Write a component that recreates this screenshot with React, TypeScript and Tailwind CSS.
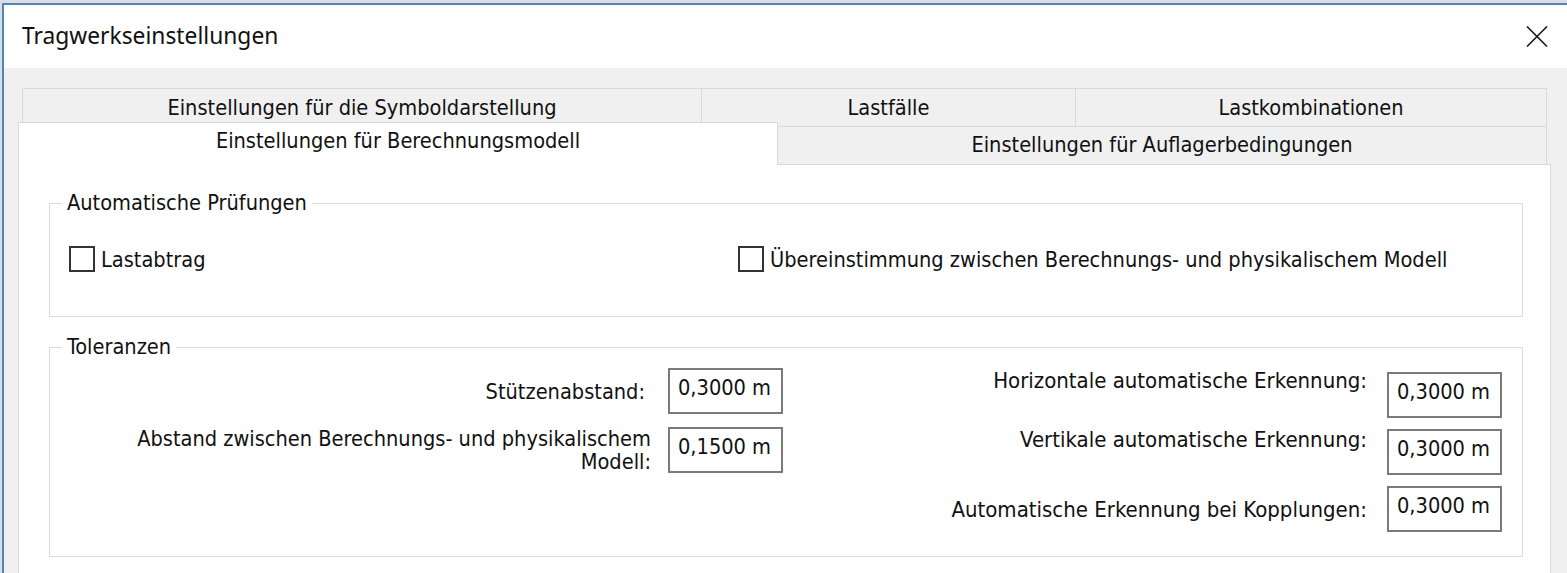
import React from "react";

const UI = "font-['DejaVu_Sans_Condensed','DejaVu_Sans','Liberation_Sans',sans-serif] text-[21.6px] text-[#111]";

function CloseIcon() {
  return (
    <svg width="22" height="21" viewBox="0 0 22 21" fill="none" stroke="#1a1a1a" strokeWidth="1.6">
      <path d="M1 0.5 L21 20.5 M21 0.5 L1 20.5" />
    </svg>
  );
}

function CheckBox({ label }: { label: string }) {
  return (
    <div className="flex items-center">
      <span className="h-[26px] w-[26px] border-2 border-[#333] bg-white" />
      <span className="ml-[6px] leading-[25px]">{label}</span>
    </div>
  );
}

function ValueBox({ value }: { value: string }) {
  return (
    <div className="h-[46px] w-[115px] border-2 border-[#7a7a7a] bg-white pl-[8px] pt-[5px] leading-[25px]">{value}</div>
  );
}

export default function App() {
  return (
    <div className={`h-[573px] w-[1567px] overflow-hidden bg-[#dedede] pl-[2px] pt-[3px] ${UI}`}>
      <div className="flex h-[600px] flex-col border-l-2 border-t-2 border-[#4a86c5] bg-[#f0f0f0]">
        {/* title bar */}
        <div className="flex h-[63px] shrink-0 items-center justify-between bg-white pl-[18px] pr-[19px]">
          <span className="font-['Noto_Sans',sans-serif] text-[22.8px] text-[#111]">Tragwerkseinstellungen</span>
          <CloseIcon />
        </div>

        <div className="pl-[14px] pt-[20px]">
          {/* upper tab row */}
          <div className="flex pl-[4px]">
            <div className="flex h-[38px] w-[680px] items-center justify-center border-l border-r border-t border-[#d9d9d9] pt-[2px]">
              Einstellungen für die Symboldarstellung
            </div>
            <div className="flex h-[38px] w-[374px] items-center justify-center border-r border-t border-[#d9d9d9] pt-[2px]">
              Lastfälle
            </div>
            <div className="flex h-[38px] w-[471px] items-center justify-center border-r border-t border-[#d9d9d9] pt-[2px]">
              Lastkombinationen
            </div>
          </div>

          {/* lower tab row */}
          <div className="flex h-[38px] items-start">
            <div className="relative z-10 -mb-px -mt-[4px] flex h-[43px] w-[760px] items-center justify-center border-l border-r border-t border-[#d9d9d9] bg-white pb-[5px]">
              Einstellungen für Berechnungsmodell
            </div>
            <div className="flex h-[38px] w-[769px] items-center justify-center border-r border-t border-[#d9d9d9]">
              Einstellungen für Auflagerbedingungen
            </div>
          </div>

          {/* tab page */}
          <div className="h-[420px] w-[1533px] border border-[#d9d9d9] bg-white pl-[30px] pr-[27px] pt-[26px]">
            <fieldset className="border border-[#dcdcdc]">
              <legend className="ml-[12px] px-[5px] leading-[24px]">Automatische Prüfungen</legend>
              <div className="flex pb-[44px] pl-[19px] pt-[31px]">
                <div className="w-[669px]">
                  <CheckBox label="Lastabtrag" />
                </div>
                <CheckBox label="Übereinstimmung zwischen Berechnungs- und physikalischem Modell" />
              </div>
            </fieldset>

            <fieldset className="mt-[18px] border border-[#dcdcdc]">
              <legend className="ml-[12px] px-[5px] leading-[24px]">Toleranzen</legend>
              <div className="flex items-start pb-[24px]">
                <div className="grid grid-cols-[601px_115px] items-center gap-x-[17px] gap-y-[13px] pt-[9px]">
                  <span className="pr-[6px] text-right leading-[25px]">Stützenabstand:</span>
                  <ValueBox value="0,3000 m" />
                  <span className="text-right leading-[23px]">
                    Abstand zwischen Berechnungs- und physikalischem
                    <br />
                    Modell:
                  </span>
                  <ValueBox value="0,1500 m" />
                </div>

                <div className="ml-[84px] grid grid-cols-[500px_115px] gap-x-[20px] gap-y-[11px] pt-[13px]">
                  <span className="-mt-[4px] self-start text-right text-[22px] leading-[25px]">Horizontale automatische Erkennung:</span>
                  <ValueBox value="0,3000 m" />
                  <span className="-mt-[2px] self-start text-right text-[22px] leading-[25px]">Vertikale automatische Erkennung:</span>
                  <ValueBox value="0,3000 m" />
                  <span className="self-center text-right text-[22px] leading-[25px]">Automatische Erkennung bei Kopplungen:</span>
                  <ValueBox value="0,3000 m" />
                </div>
              </div>
            </fieldset>
          </div>
        </div>
      </div>
    </div>
  );
}
